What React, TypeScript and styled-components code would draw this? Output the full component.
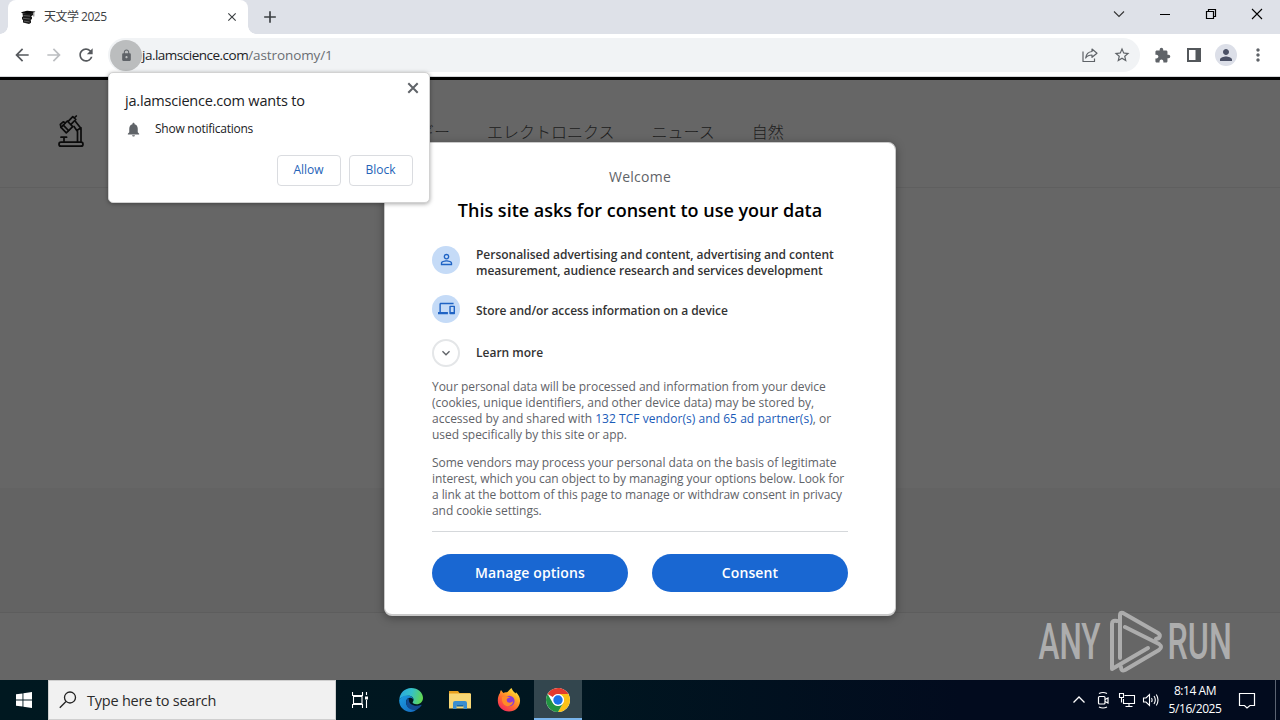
import React from 'react';
import styled, { createGlobalStyle } from 'styled-components';
import {
  MdAdd,
  MdArrowBack,
  MdArrowForward,
  MdClose,
  MdDevices,
  MdExpandMore,
  MdExtension,
  MdLock,
  MdMoreVert,
  MdNotifications,
  MdPerson,
  MdPersonOutline,
  MdRefresh,
  MdStarBorder,
} from 'react-icons/md';

const uiFont = `'Open Sans', 'Noto Sans', 'Noto Sans CJK JP', sans-serif`;

const GlobalStyle = createGlobalStyle`
  * {
    box-sizing: border-box;
  }

  body {
    margin: 0;
    overflow: hidden;
    font-family: ${uiFont};
  }

  svg {
    display: block;
    flex: none;
  }
`;

const Desktop = styled.div`
  position: relative;
  display: flex;
  flex-direction: column;
  width: 1280px;
  height: 720px;
`;

/* Tab strip */

const TabStrip = styled.div`
  display: flex;
  height: 34px;
  padding-left: 8px;
  background: #dee1e8;
`;

const Tab = styled.div`
  position: relative;
  display: flex;
  align-items: center;
  width: 240px;
  padding: 0 9px 0 12px;
  background: #fff;
  border-radius: 8px 8px 0 0;

  &::before,
  &::after {
    content: '';
    position: absolute;
    bottom: 0;
    width: 8px;
    height: 8px;
  }

  &::before {
    left: -8px;
    background: radial-gradient(circle at 0 0, transparent 7.5px, #fff 8px);
  }

  &::after {
    right: -8px;
    background: radial-gradient(circle at 100% 0, transparent 7.5px, #fff 8px);
  }
`;

const TabTitle = styled.span`
  flex: 1;
  margin-left: 8px;
  color: #3c4043;
  font-size: 12px;
  letter-spacing: -0.5px;
  line-height: 16px;
  white-space: nowrap;
`;

const NewTab = styled.div`
  display: flex;
  align-items: center;
  margin-left: 12px;
  color: #3c4043;
`;

const WindowControls = styled.div`
  display: flex;
  align-items: center;
  margin: 0 15px 6px auto;
  gap: 30px;
`;

/* Toolbar */

const Toolbar = styled.div`
  display: flex;
  align-items: center;
  height: 43px;
  padding: 0 6px 0 12px;
  background: #fff;
  border-bottom: 1px solid #d5d7da;
  color: #5f6368;
`;

const NavButtons = styled.div`
  display: flex;
  gap: 12px;
`;

const NavIcon = styled.span<{ $disabled?: boolean }>`
  color: ${(props): string => (props.$disabled ? '#bcbec1' : '#56595d')};
`;

const Omnibox = styled.div`
  display: flex;
  align-items: center;
  width: 1032px;
  height: 34px;
  margin-left: 12px;
  padding: 0 9px 0 2px;
  background: #f1f3f5;
  border-radius: 17px;
`;

const LockBadge = styled.div`
  display: flex;
  align-items: center;
  justify-content: center;
  width: 32px;
  height: 31px;
  background: #bbbdbe;
  border-radius: 50%;
`;

const Url = styled.span`
  flex: 1;
  color: #202124;
  font-size: 13.5px;
  letter-spacing: -0.5px;
  line-height: 20px;
`;

const UrlPath = styled.span`
  color: #6a6e73;
  letter-spacing: -0.1px;
`;

const OmniActions = styled.div`
  display: flex;
  align-items: center;
  gap: 15px;
`;

const ToolbarActions = styled.div`
  display: flex;
  margin-left: 6px;
`;

const ToolbarSlot = styled.div`
  display: flex;
  align-items: center;
  justify-content: center;
  width: 32px;
  height: 32px;
`;

const Avatar = styled.div`
  display: flex;
  align-items: center;
  justify-content: center;
  width: 22px;
  height: 22px;
  background: #dcdfe8;
  border-radius: 50%;
  color: #4b5166;
`;

/* Web page */

const Page = styled.div`
  position: relative;
  display: flex;
  flex-direction: column;
  height: 603px;
  background: #666;
  border-top: 3px solid #010101;
`;

const SiteHeader = styled.header`
  display: flex;
  height: 108px;
  padding: 34px 0 0 56px;
  border-bottom: 1px solid #5f5f5f;
`;

const SiteNav = styled.nav`
  display: flex;
  margin: 5px 0 0 332px;
  gap: 37px;
  color: #1c1c1c;
  font: 300 16px/24px 'Noto Sans CJK JP', sans-serif;
`;

const SiteBody = styled.div`
  flex: 1;
`;

const SiteFooter = styled.footer`
  height: 192px;
`;

const FooterBand = styled.div`
  height: 125px;
  background: #636363;
  border-bottom: 1px solid #5d5d5d;
`;

const Watermark = styled.div`
  position: absolute;
  top: 528px;
  left: 1036px;
`;

/* Consent dialog */

const Overlay = styled.div`
  position: absolute;
  inset: -3px 0 0;
  display: flex;
  align-items: center;
  justify-content: center;
`;

const Dialog = styled.div`
  width: 512px;
  height: 474px;
  padding: 24px 48px;
  background: #fff;
  border: 1px solid #c9c9c9;
  border-width: 1px 1px 2px;
  border-radius: 8px;
  box-shadow: 0 2px 10px rgba(0, 0, 0, 0.35);
`;

const Welcome = styled.p`
  margin: 0;
  color: #5f6368;
  font-size: 14px;
  letter-spacing: 0.25px;
  line-height: 20px;
  text-align: center;
`;

const Title = styled.h1`
  margin: 9px -10px 0;
  color: #000;
  font-size: 18px;
  font-weight: 600;
  letter-spacing: 0;
  line-height: 28px;
  text-align: center;
  white-space: nowrap;
`;

const Purposes = styled.ul`
  display: flex;
  flex-direction: column;
  margin: 22px 0 0 -1px;
  padding: 0;
  list-style: none;
`;

const Purpose = styled.li<{ $height: number }>`
  display: flex;
  height: ${(props): number => props.$height}px;
  color: #333;
  font-size: 12px;
  font-weight: 600;
  line-height: 16px;
`;

const PurposeIcon = styled.span<{ $outlined?: boolean }>`
  display: flex;
  align-items: center;
  justify-content: center;
  width: 28px;
  height: 28px;
  margin-right: 16px;
  background: ${(props): string => (props.$outlined ? '#fff' : '#c5dbf7')};
  border: ${(props): string => (props.$outlined ? '2px solid #e4e6e8' : 'none')};
  border-radius: 50%;
  color: ${(props): string => (props.$outlined ? '#5f6368' : '#1f63c4')};
`;

const PurposeText = styled.span<{ $top: number }>`
  padding-top: ${(props): number => props.$top}px;
  white-space: nowrap;
`;

const Paragraph = styled.p`
  margin: 0 -6px 12px -1px;
  color: #5f6368;
  font-size: 12px;
  line-height: 16px;
  white-space: nowrap;
`;

const Line = styled.span<{ $spacing?: number }>`
  display: block;
  letter-spacing: ${(props): number => props.$spacing || 0}px;
`;

const VendorLink = styled.span`
  color: #1a5bb8;
  letter-spacing: 0.04px;
`;

const Divider = styled.div`
  height: 1px;
  margin: 0 -1px;
  background: #d5d8db;
`;

const DialogActions = styled.div`
  display: flex;
  margin: 22px -1px 0;
  gap: 24px;
`;

const PillButton = styled.button`
  flex: 1;
  height: 38px;
  padding: 1px 0 0;
  background: #1967d2;
  border: 0;
  border-radius: 19px;
  color: #fff;
  font: 600 14px/20px ${uiFont};
  letter-spacing: 0.1px;
`;

/* Notification permission bubble */

const Bubble = styled.div`
  position: absolute;
  top: 72px;
  left: 108px;
  width: 322px;
  height: 131px;
  padding: 19px 17px 0 16px;
  background: #fff;
  border: 1px solid #d2d2d2;
  border-radius: 5px;
  box-shadow: 0 1px 4px rgba(0, 0, 0, 0.35);
`;

const BubbleClose = styled.span`
  position: absolute;
  top: 7px;
  right: 8px;
  color: #5f6368;
`;

const BubbleTitle = styled.div`
  color: #202124;
  font-size: 14.5px;
  letter-spacing: -0.2px;
  line-height: 18px;
`;

const BubbleRow = styled.div`
  display: flex;
  align-items: center;
  margin-top: 10px;
  gap: 13px;
  color: #202124;
  font-size: 12px;
  letter-spacing: -0.25px;
  line-height: 18px;

  svg {
    color: #5f6368;
  }
`;

const BubbleActions = styled.div`
  display: flex;
  justify-content: flex-end;
  margin-top: 17px;
  margin-right: -1px;
  gap: 8px;
`;

const OutlineButton = styled.button`
  width: 64px;
  height: 31px;
  padding: 0 1px 1px 0;
  background: #fff;
  border: 1px solid #dadce0;
  border-radius: 4px;
  color: #2563b8;
  font: 500 12px/16px ${uiFont};
`;

/* Taskbar */

const Taskbar = styled.div`
  display: flex;
  height: 40px;
  background: linear-gradient(90deg, #001820 0, #001620 45%, #020b1e 75%, #020b1e 100%);
`;

const TaskButton = styled.div<{ $active?: boolean }>`
  display: flex;
  align-items: center;
  justify-content: center;
  width: 48px;
  height: 40px;
  background: ${(props): string => (props.$active ? '#33464e' : 'transparent')};
  box-shadow: ${(props): string => (props.$active ? 'inset 0 -2px #79b5ec' : 'none')};
`;

const SearchBox = styled.div`
  display: flex;
  align-items: center;
  width: 288px;
  padding: 0 10px;
  gap: 10px;
  background: #f1f1f1;
  border: 1px solid #cfcfcf;
  color: #2b2b2b;
  font-size: 14.5px;
  letter-spacing: -0.22px;
`;

const PinnedApps = styled.div`
  display: flex;
  margin-left: 3px;
  gap: 1px;
`;

const Tray = styled.div`
  display: flex;
  align-items: center;
  margin-left: auto;
  padding-right: 4px;
  border-right: 1px solid #5b6372;
  margin-right: 4px;
`;

const TrayIcons = styled.div`
  display: flex;
  align-items: center;
  gap: 6px;
`;

const Clock = styled.div`
  width: 56px;
  margin-left: 7px;
  color: #fff;
  font-size: 12px;
  letter-spacing: -0.45px;
  line-height: 18px;
  text-align: center;
  white-space: nowrap;
`;

const Books = (): React.ReactElement => (
  <svg width="16" height="16" viewBox="0 0 16 16">
    <path d="M1 3.200 7 1.800l8.500.8-4.500 2.600-8-.4z" fill="#0b0b0b" />
    <path d="M2.500 4.800h9l1.500-1.300v2.400L11 7.500l1 .6v2l-1.500 1 .5.700v2L9 15l-6-1.500V11l-1-.8V8l1-.6z" fill="#1a1a1a" />
    <path d="M3.500 6.600l6.500.5M3 9.300l6.800.7M4 12.100l5.500.8" stroke="#8a8a8a" strokeWidth=".6" />
    <path d="M13.800 3v4.500" stroke="#777" />
  </svg>
);

const Microscope = (): React.ReactElement => (
  <svg width="30" height="34" viewBox="0 0 30 34" fill="none" stroke="#0b0b0b" strokeWidth="1.700" strokeLinejoin="round" strokeLinecap="round">
    <rect x="3" y="28.200" width="24" height="4" rx="2" />
    <path d="M8 27.500v-4.300M5 23.200h5.600" />
    <path d="M21.500 28V17.500M25 28V14.500l-5.500-7M21.500 17.500l-3.500-5M20.800 16.500l4.200-2.700" />
    <path d="M5 13.400 11.300 7l5.400 5.600-6.400 6.200z" />
    <path d="M7.500 11.300l5 5.200M12.200 7.400l4.600-4.700 3 2.800-4.600 4.700M18.200 4 20.300 2M5 13.400 4.300 10.300l2.900-2.500 2 1" />
  </svg>
);

const ShareIcon = (): React.ReactElement => (
  <svg width="16" height="16" viewBox="0 0 16 16" fill="none" stroke="#5f6368" strokeWidth="1.200" strokeLinejoin="round">
    <path d="M1 4.500v10h11.500V11.500" />
    <path d="M10 2 15 6.200l-5 4.100V8C6.800 8 5 9 3.700 11 4.200 7 6.500 4.800 10 4.500z" />
  </svg>
);

const SidePanelIcon = (): React.ReactElement => (
  <svg width="16" height="16" viewBox="0 0 16 16">
    <path d="M1 1h14v14H1zm2 2v10h6.500V3z" fill="#53575b" fillRule="evenodd" />
  </svg>
);

const BoldCloseIcon = (): React.ReactElement => (
  <svg width="16" height="16" viewBox="0 0 16 16" stroke="currentColor" strokeWidth="2">
    <path d="M3.300 3.300l9.400 9.400M12.700 3.300l-9.400 9.400" />
  </svg>
);

const AnyRunLogo = (): React.ReactElement => (
  <svg width="216" height="72" viewBox="0 0 216 72" opacity=".6">
    <g fill="#ddd" fontFamily="Roboto, sans-serif" fontSize="50" fontWeight="500">
      <text transform="translate(2.500 50.500) scale(.63 1)">ANY</text>
      <text transform="translate(131.500 50.500) scale(.645 1)">RUN</text>
    </g>
    <g fill="none" stroke="#ddd" strokeWidth="4" strokeLinejoin="round" strokeLinecap="round">
      <path d="M81 13c-4-1-5 1-5 3v45l36-21" />
      <path d="M84 50V7q0-3 3-2l35 20q3 2 1 5l-3 1" />
      <path d="M89 19l34 17q4 3 0 6L89 62q-4 2-4-3" />
    </g>
  </svg>
);

const WindowsLogo = (): React.ReactElement => (
  <svg width="16" height="16" viewBox="0 0 16 16" fill="#fff">
    <path d="M0 2.300 6.500 1.400v6.100H0zM7.400 1.200 16 0v7.500H7.400zM0 8.400h6.500v6.200L0 13.700zM7.400 8.400H16V16l-8.600-1.200z" />
  </svg>
);

const TaskView = (): React.ReactElement => (
  <svg width="16" height="16" viewBox="0 0 16 16" fill="none" stroke="#fff" strokeWidth="1.100">
    <path d="M.5 0v3.500h10V0M.5 16v-3.500h10V16M1.500 4.500h8.500v7H1.500zM14.500 0v3M14.500 8v8" />
    <path d="M13 4.500h3v3h-3z" fill="#fff" stroke="none" />
  </svg>
);

const EdgeIcon = (): React.ReactElement => (
  <svg width="24" height="24" viewBox="0 0 256 256">
    <defs>
      <linearGradient id="edgeTop" x1="0" y1=".3" x2="1" y2=".5">
        <stop offset="0" stopColor="#2aa8df" />
        <stop offset=".5" stopColor="#35c1c8" />
        <stop offset="1" stopColor="#62d84e" />
      </linearGradient>
      <linearGradient id="edgeLeft" x1="0" y1="0" x2="1" y2="1">
        <stop offset="0" stopColor="#1b9de2" />
        <stop offset="1" stopColor="#1568bd" />
      </linearGradient>
    </defs>
    <path d="M4 122C8 54 62 0 130 0c74 0 126 53 126 106 0 39-30 67-69 67-29 0-42-12-42-21 0-7 10-12 10-28 0-23-24-41-53-41-46 0-83 21-98 39z" fill="url(#edgeTop)" />
    <path d="M2 126C20 90 62 76 96 80c34 3 57 23 59 43-8-13-23-20-37-20-27 0-42 20-42 46 0 51 43 79 90 79 10 0 18-1 27-4-19 20-42 32-68 32C53 256-2 196 2 126z" fill="url(#edgeLeft)" />
    <path d="M103 107c-18 9-27 26-27 45 0 55 47 94 117 76 19-8 35-23 48-43 3-5-1-8-5-6-44 22-117 10-129-37-3-12-2-24-4-35z" fill="#124b92" />
  </svg>
);

const FolderIcon = (): React.ReactElement => (
  <svg width="24" height="24" viewBox="0 0 24 24">
    <path d="M1 3h9l1.500 2H22v3H1z" fill="#e8a01e" />
    <path d="M1 5.500h22v15H1z" fill="#f8d775" />
    <path d="M5 21v-6q0-2 2-2h10q2 0 2 2v6h-3.500v-4h-7v4z" fill="#3b8ed0" />
    <path d="M8.500 17h7v1.500h-7z" fill="#1769ab" />
  </svg>
);

const FirefoxIcon = (): React.ReactElement => (
  <svg width="24" height="24" viewBox="0 0 24 24">
    <defs>
      <linearGradient id="fox" x1=".9" y1="0" x2=".2" y2="1">
        <stop offset="0" stopColor="#fff44f" />
        <stop offset=".35" stopColor="#ffad25" />
        <stop offset=".65" stopColor="#ff6534" />
        <stop offset="1" stopColor="#f4245f" />
      </linearGradient>
    </defs>
    <path d="M3 5c0-1 .4-2 1-3l2.300 3C7.500 4.200 8.800 4 10 4.300 11.500 3.500 12 2 14.500 0c1 3 2.500 3.500 4 5.500l.5-1.200C22 7 23.300 10 23 13.500 22.500 19.500 18 23.500 12 23.500S.700 19 .8 12.500C.8 9.500 1.500 7 3 5z" fill="url(#fox)" />
    <circle cx="12.300" cy="13" r="5.300" fill="#8b3bd4" />
    <path d="M5 9c3-2 6-1 8 .8-3 .2-3.500 1.200-3.200 2.700C10 15 14 15.500 16 13.300c0 3.500-3.500 5.600-6.500 4.700C6 17 4.500 13 5 9z" fill="#ff8b28" />
  </svg>
);

const ChromeIcon = (): React.ReactElement => (
  <svg width="24" height="24" viewBox="0 0 24 24">
    <circle cx="12" cy="12" r="12" fill="#fff" />
    <path d="M12 0c4.440 0 8.320 2.410 10.390 6H12a6 6 0 0 0-5.200 3L1.610 6A12 12 0 0 1 12 0z" fill="#e33b2e" />
    <path d="M22.390 6A12 12 0 0 1 12 24l5.200-9a6 6 0 0 0 0-6 6 6 0 0 0-5.200-3z" fill="#fbc116" />
    <path d="M1.610 6 6.800 15A6 6 0 0 0 12 18a6 6 0 0 0 5.200-3L12 24A12 12 0 0 1 1.610 6z" fill="#229342" />
    <circle cx="12" cy="12" r="5.800" fill="#fff" />
    <circle cx="12" cy="12" r="4.700" fill="#1a73e8" />
  </svg>
);

const BrowserChrome = (): React.ReactElement => (
  <>
    <TabStrip>
      <Tab>
        <Books />
        <TabTitle>天文学 2025</TabTitle>
        <MdClose size={14} color="#3c4043" />
      </Tab>
      <NewTab>
        <MdAdd size={20} />
      </NewTab>
      <WindowControls>
        <svg width="16" height="16" viewBox="0 0 16 16" fill="none" stroke="#333" strokeWidth="1.100">
          <path d="M3 5.500 8 10.500l5-5" />
        </svg>
        <svg width="16" height="16" viewBox="0 0 16 16" stroke="#000">
          <path d="M3 8.500h10" />
        </svg>
        <svg width="16" height="16" viewBox="0 0 16 16" fill="none" stroke="#000" strokeWidth="1.200">
          <path d="M3.500 5.500h7v7h-7zM5.500 5V3.500h7v7H11" />
        </svg>
        <svg width="16" height="16" viewBox="0 0 16 16" stroke="#000" strokeWidth="1.100">
          <path d="M3 3l10 10M13 3 3 13" />
        </svg>
      </WindowControls>
    </TabStrip>
    <Toolbar>
      <NavButtons>
        <NavIcon><MdArrowBack size={20} /></NavIcon>
        <NavIcon $disabled><MdArrowForward size={20} /></NavIcon>
        <NavIcon><MdRefresh size={20} /></NavIcon>
      </NavButtons>
      <Omnibox>
        <LockBadge><MdLock size={13} /></LockBadge>
        <Url>ja.lamscience.com<UrlPath>/astronomy/1</UrlPath></Url>
        <OmniActions>
          <ShareIcon />
          <MdStarBorder size={18} />
        </OmniActions>
      </Omnibox>
      <ToolbarActions>
        <ToolbarSlot><MdExtension size={17} /></ToolbarSlot>
        <ToolbarSlot><SidePanelIcon /></ToolbarSlot>
        <ToolbarSlot>
          <Avatar><MdPerson size={18} /></Avatar>
        </ToolbarSlot>
        <ToolbarSlot><MdMoreVert size={20} /></ToolbarSlot>
      </ToolbarActions>
    </Toolbar>
  </>
);

const ConsentDialog = (): React.ReactElement => (
  <Overlay>
    <Dialog>
      <Welcome>Welcome</Welcome>
      <Title>This site asks for consent to use your data</Title>
      <Purposes>
        <Purpose $height={49}>
          <PurposeIcon><MdPersonOutline size={17} /></PurposeIcon>
          <PurposeText $top={1}>
            <Line $spacing={-0.02}>Personalised advertising and content, advertising and content</Line>
            <Line $spacing={-0.04}>measurement, audience research and services development</Line>
          </PurposeText>
        </Purpose>
        <Purpose $height={44}>
          <PurposeIcon><MdDevices size={17} /></PurposeIcon>
          <PurposeText $top={8}>
            <Line $spacing={-0.06}>Store and/or access information on a device</Line>
          </PurposeText>
        </Purpose>
        <Purpose $height={40}>
          <PurposeIcon $outlined><MdExpandMore size={16} /></PurposeIcon>
          <PurposeText $top={6}>Learn more</PurposeText>
        </Purpose>
      </Purposes>
      <Paragraph>
        <Line $spacing={-0.05}>Your personal data will be processed and information from your device</Line>
        <Line $spacing={-0.04}>(cookies, unique identifiers, and other device data) may be stored by,</Line>
        <Line $spacing={-0.01}>
          accessed by and shared with <VendorLink>132 TCF vendor(s) and 65 ad partner(s)</VendorLink>, or
        </Line>
        <Line $spacing={-0.03}>used specifically by this site or app.</Line>
      </Paragraph>
      <Paragraph>
        <Line $spacing={-0.02}>Some vendors may process your personal data on the basis of legitimate</Line>
        <Line $spacing={-0.09}>interest, which you can object to by managing your options below. Look for</Line>
        <Line $spacing={-0.07}>a link at the bottom of this page to manage or withdraw consent in privacy</Line>
        <Line $spacing={-0.05}>and cookie settings.</Line>
      </Paragraph>
      <Divider />
      <DialogActions>
        <PillButton>Manage options</PillButton>
        <PillButton>Consent</PillButton>
      </DialogActions>
    </Dialog>
  </Overlay>
);

const PermissionBubble = (): React.ReactElement => (
  <Bubble>
    <BubbleClose><BoldCloseIcon /></BubbleClose>
    <BubbleTitle>ja.lamscience.com wants to</BubbleTitle>
    <BubbleRow>
      <MdNotifications size={17} />
      Show notifications
    </BubbleRow>
    <BubbleActions>
      <OutlineButton>Allow</OutlineButton>
      <OutlineButton>Block</OutlineButton>
    </BubbleActions>
  </Bubble>
);

const SystemTray = (): React.ReactElement => (
  <Tray>
    <TrayIcons>
      <svg width="18" height="18" viewBox="0 0 18 18" fill="none" stroke="#fff" strokeWidth="1.300">
        <path d="M3.500 11.500 9 6l5.500 5.500" />
      </svg>
      <svg width="18" height="18" viewBox="0 0 18 18" fill="none" stroke="#fff" strokeWidth="1.200">
        <rect x="4.500" y="5.500" width="6.500" height="7.500" rx="1" />
        <path d="M11 8.500l3-1.500v5l-3-1.500M5 2.500Q9 .5 13 2.500M5 16q4 2 8 0" />
      </svg>
      <svg width="18" height="18" viewBox="0 0 18 18" fill="none" stroke="#fff" strokeWidth="1.100">
        <path d="M6.500 4.500h10v8h-11V8M11 12.500v3M7.500 15.500h7M1.500 2.500h4v4h-4zM3.500 6.500v5" />
      </svg>
      <svg width="18" height="18" viewBox="0 0 18 18" fill="none" stroke="#fff" strokeWidth="1.100">
        <path d="M1.500 7h2.500l3.500-3.500v11L4 11H1.500zM9.500 7q1.200 2 0 4M12 5q2.600 4 0 8M14.300 3.500q3.400 5.500 0 11" />
      </svg>
    </TrayIcons>
    <Clock>
      <div>8:14 AM</div>
      <div>5/16/2025</div>
    </Clock>
    <TaskButton>
      <svg width="18" height="18" viewBox="0 0 18 18" fill="none" stroke="#fff" strokeWidth="1.200">
        <path d="M1.500 2.500h15v12h-4.500L9 17l-2.500-2.500h-5z" />
      </svg>
    </TaskButton>
  </Tray>
);

const App: React.FC = () => (
  <Desktop>
    <GlobalStyle />
    <BrowserChrome />
    <Page>
      <SiteHeader>
        <Microscope />
        <SiteNav>
          <span>ギー</span>
          <span>エレクトロニクス</span>
          <span>ニュース</span>
          <span>自然</span>
        </SiteNav>
      </SiteHeader>
      <SiteBody />
      <SiteFooter>
        <FooterBand />
      </SiteFooter>
      <Watermark><AnyRunLogo /></Watermark>
      <ConsentDialog />
    </Page>
    <Taskbar>
      <TaskButton><WindowsLogo /></TaskButton>
      <SearchBox>
        <svg width="18" height="18" viewBox="0 0 18 18" fill="none" stroke="#222" strokeWidth="1.300">
          <circle cx="11" cy="6.500" r="5.500" />
          <path d="M7 10.500.800 16.800" />
        </svg>
        Type here to search
      </SearchBox>
      <TaskButton><TaskView /></TaskButton>
      <PinnedApps>
        <TaskButton><EdgeIcon /></TaskButton>
        <TaskButton><FolderIcon /></TaskButton>
        <TaskButton><FirefoxIcon /></TaskButton>
        <TaskButton $active><ChromeIcon /></TaskButton>
      </PinnedApps>
      <SystemTray />
    </Taskbar>
    <PermissionBubble />
  </Desktop>
);

export default App;
